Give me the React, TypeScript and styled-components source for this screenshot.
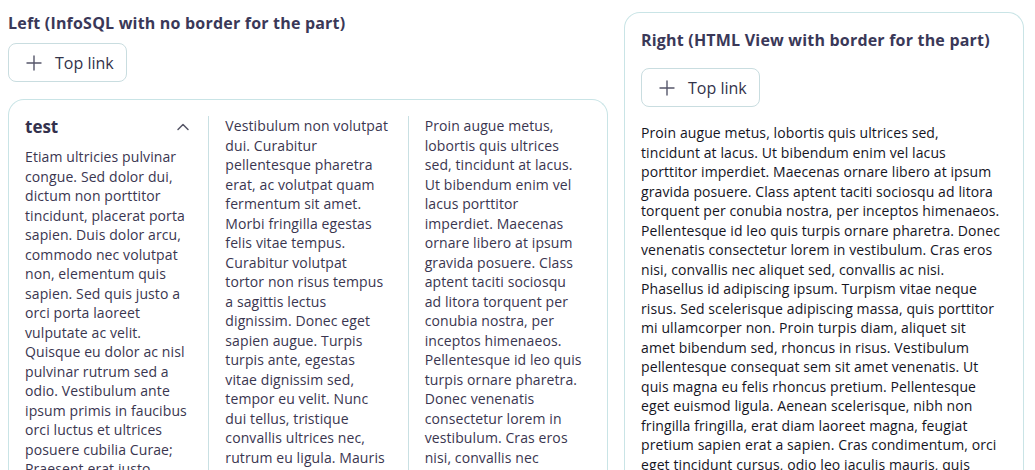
import React from "react";
import styled, { createGlobalStyle } from "styled-components";

const GlobalStyle = createGlobalStyle`
  html, body { margin: 0; padding: 0; overflow: hidden; background: #ffffff; }
  body { font-family: "Open Sans", "Noto Sans", sans-serif; }
`;

const Page = styled.div`
  display: flex;
  align-items: flex-start;
  gap: 16px;
  padding: 12px 11px 0 8px;
  height: 458px;
  overflow: hidden;
`;

const LeftPane = styled.section`
  width: 600px;
  display: flex;
  flex-direction: column;
  align-items: flex-start;
  & > * { flex-shrink: 0; }
`;

const Title = styled.h2`
  margin: 0;
  font-size: 16px;
  line-height: 22px;
  font-weight: 700;
  letter-spacing: 0.2px;
  color: #3a3858;
  white-space: nowrap;
`;

const LinkButton = styled.button<{ $top: number }>`
  margin-top: ${(p) => p.$top}px;
  height: 39px;
  box-sizing: border-box;
  display: inline-flex;
  align-items: center;
  gap: 13px;
  padding: 0 12px 0 17px;
  background: #ffffff;
  border: 1px solid #c9dde0;
  border-radius: 8px;
  font-family: inherit;
  font-size: 16px;
  color: #33334a;
  cursor: pointer;
`;

const Card = styled.div`
  margin-top: 17px;
  width: 100%;
  box-sizing: border-box;
  border: 1px solid #c9e4e6;
  border-bottom: none;
  border-radius: 16px 16px 0 0;
  display: grid;
  grid-template-columns: repeat(3, 1fr);
  padding-top: 16px;
  height: 400px;
`;

const Column = styled.div<{ $first?: boolean }>`
  padding: 0 16px;
  border-left: ${(p) => (p.$first ? "none" : "1px solid #c9e0e3")};
  overflow: hidden;
`;

const PartHeader = styled.div`
  display: flex;
  align-items: center;
  justify-content: space-between;
  margin-bottom: 9px;
`;

const PartTitle = styled.h3`
  margin: 0;
  font-size: 17px;
  line-height: 22px;
  font-weight: 700;
  color: #33314d;
`;

const Chevron = styled.svg`
  width: 14px;
  height: 14px;
  margin-right: 2px;
  color: #555566;
`;

const Body = styled.div<{ $dark?: boolean }>`
  font-size: 14px;
  line-height: 19.5px;
  letter-spacing: 0.1px;
  color: ${(p) => (p.$dark ? "#15151f" : "#3a3650")};
`;

const Line = styled.span`
  display: block;
  white-space: nowrap;
`;

const RightCard = styled.section`
  width: 400px;
  box-sizing: border-box;
  height: 470px;
  border: 1px solid #c9e4e6;
  border-bottom: none;
  border-radius: 16px 16px 0 0;
  padding: 16px 16px 0 16px;
  display: flex;
  flex-direction: column;
  align-items: flex-start;
  overflow: hidden;
  & > * { flex-shrink: 0; }
`;

const RightBody = styled(Body)`
  margin-top: 16px;
`;

const PlusIcon = () => (
  <svg width="16" height="16" viewBox="0 0 16 16" fill="none" stroke="#55566a" strokeWidth="1.4" strokeLinecap="round">
    <path d="M8 1v14M1 8h14" />
  </svg>
);

const col1 = [
  "Etiam ultricies pulvinar",
  "congue. Sed dolor dui,",
  "dictum non porttitor",
  "tincidunt, placerat porta",
  "sapien. Duis dolor arcu,",
  "commodo nec volutpat",
  "non, elementum quis",
  "sapien. Sed quis justo a",
  "orci porta laoreet",
  "vulputate ac velit.",
  "Quisque eu dolor ac nisl",
  "pulvinar rutrum sed a",
  "odio. Vestibulum ante",
  "ipsum primis in faucibus",
  "orci luctus et ultrices",
  "posuere cubilia Curae;",
  "Praesent erat justo,",
];

const col2 = [
  "Vestibulum non volutpat",
  "dui. Curabitur",
  "pellentesque pharetra",
  "erat, ac volutpat quam",
  "fermentum sit amet.",
  "Morbi fringilla egestas",
  "felis vitae tempus.",
  "Curabitur volutpat",
  "tortor non risus tempus",
  "a sagittis lectus",
  "dignissim. Donec eget",
  "sapien augue. Turpis",
  "turpis ante, egestas",
  "vitae dignissim sed,",
  "tempor eu velit. Nunc",
  "dui tellus, tristique",
  "convallis ultrices nec,",
  "rutrum eu ligula. Mauris",
];

const col3 = [
  "Proin augue metus,",
  "lobortis quis ultrices",
  "sed, tincidunt at lacus.",
  "Ut bibendum enim vel",
  "lacus porttitor",
  "imperdiet. Maecenas",
  "ornare libero at ipsum",
  "gravida posuere. Class",
  "aptent taciti sociosqu",
  "ad litora torquent per",
  "conubia nostra, per",
  "inceptos himenaeos.",
  "Pellentesque id leo quis",
  "turpis ornare pharetra.",
  "Donec venenatis",
  "consectetur lorem in",
  "vestibulum. Cras eros",
  "nisi, convallis nec",
];

const right = [
  "Proin augue metus, lobortis quis ultrices sed,",
  "tincidunt at lacus. Ut bibendum enim vel lacus",
  "porttitor imperdiet. Maecenas ornare libero at ipsum",
  "gravida posuere. Class aptent taciti sociosqu ad litora",
  "torquent per conubia nostra, per inceptos himenaeos.",
  "Pellentesque id leo quis turpis ornare pharetra. Donec",
  "venenatis consectetur lorem in vestibulum. Cras eros",
  "nisi, convallis nec aliquet sed, convallis ac nisi.",
  "Phasellus id adipiscing ipsum. Turpism vitae neque",
  "risus. Sed scelerisque adipiscing massa, quis porttitor",
  "mi ullamcorper non. Proin turpis diam, aliquet sit",
  "amet bibendum sed, rhoncus in risus. Vestibulum",
  "pellentesque consequat sem sit amet venenatis. Ut",
  "quis magna eu felis rhoncus pretium. Pellentesque",
  "eget euismod ligula. Aenean scelerisque, nibh non",
  "fringilla fringilla, erat diam laoreet magna, feugiat",
  "pretium sapien erat a sapien. Cras condimentum, orci",
  "eget tincidunt cursus, odio leo iaculis mauris, quis",
];

const Lines = ({ items }: { items: string[] }) => (
  <>
    {items.map((t, i) => (
      <Line key={i}>{t}</Line>
    ))}
  </>
);

export default function App() {
  return (
    <>
      <GlobalStyle />
      <Page>
        <LeftPane>
          <Title>Left (InfoSQL with no border for the part)</Title>
          <LinkButton $top={9}>
            <PlusIcon />
            Top link
          </LinkButton>
          <Card>
            <Column $first>
              <PartHeader>
                <PartTitle>test</PartTitle>
                <Chevron viewBox="0 0 14 14" fill="none" stroke="currentColor" strokeWidth="1.5" strokeLinecap="round" strokeLinejoin="round">
                  <path d="M2 9.5l5-5 5 5" />
                </Chevron>
              </PartHeader>
              <Body>
                <Lines items={col1} />
              </Body>
            </Column>
            <Column>
              <Body>
                <Lines items={col2} />
              </Body>
            </Column>
            <Column>
              <Body>
                <Lines items={col3} />
              </Body>
            </Column>
          </Card>
        </LeftPane>
        <RightCard>
          <Title>Right (HTML View with border for the part)</Title>
          <LinkButton $top={17}>
            <PlusIcon />
            Top link
          </LinkButton>
          <RightBody $dark>
            <Lines items={right} />
          </RightBody>
        </RightCard>
      </Page>
    </>
  );
}
